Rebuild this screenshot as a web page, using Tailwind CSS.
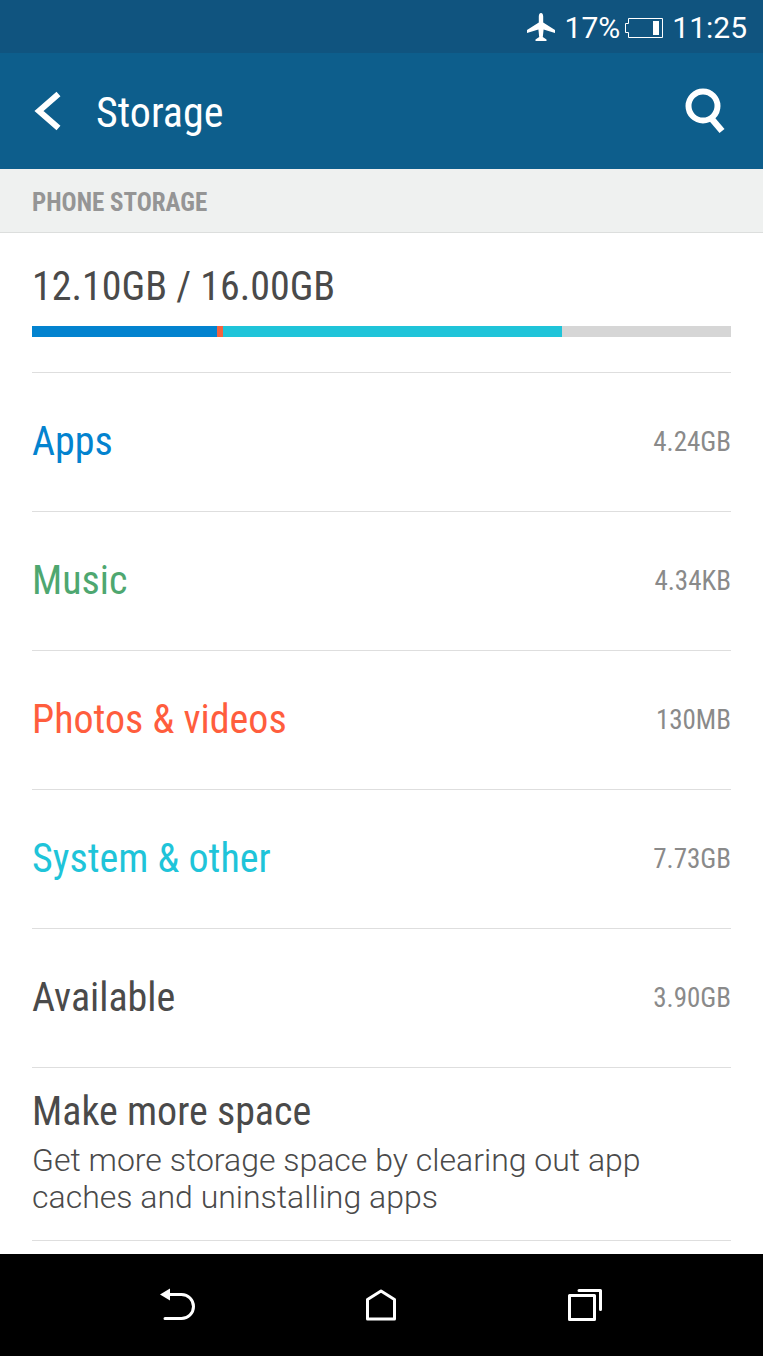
<!DOCTYPE html>
<html lang="en">

<head>
    <meta charset="UTF-8">
    <meta name="viewport" content="width=device-width, initial-scale=1">
    <title>Storage</title>
    <script src="https://cdn.jsdelivr.net/npm/@tailwindcss/browser@4"></script>
</head>

<body class="min-h-screen flex flex-col bg-white text-[#4a4a4a] font-['Roboto_Condensed','Roboto',sans-serif]">
    <!-- Status bar -->
    <div class="flex items-center justify-end gap-1 h-[53px] pt-0.5 px-4 bg-[#10547f] text-white text-[30px] leading-9 font-['Roboto',sans-serif]">
        <svg class="w-8 h-8 mr-1" viewBox="0 0 32 32" fill="currentColor" aria-hidden="true">
            <path d="M16 1c1.500 0 2.200 1.700 2.200 3.500V10.500L30 18v3L18.600 17.500l-.8 7.500 3.700 2.500V29h-11v-1.500l3.700-2.500-.8-7.500L2 21v-3l11.800-7.500V4.500C13.800 2.700 14.500 1 16 1z" />
        </svg>
        <span>17%</span>
        <svg class="w-10 h-6" viewBox="0 0 40 24" aria-hidden="true">
            <path d="M4.500 2.500h34v19h-34v-5h-3v-9h3z" fill="none" stroke="currentColor" />
            <path d="M29 5h6v14h-6z" fill="currentColor" />
        </svg>
        <span class="ml-1">11:25</span>
    </div>

    <!-- Action bar -->
    <header class="flex items-center h-[116px] px-8 bg-[#0d5e8c] text-white">
        <button type="button" aria-label="Back" class="w-16">
            <svg class="w-8 h-10" viewBox="0 0 32 40" fill="none" stroke="currentColor" stroke-width="6" aria-hidden="true">
                <path d="M26.500 3L7 20l19.500 17" />
            </svg>
        </button>
        <h1 class="flex-1 pt-1 text-[42px] leading-12">Storage</h1>
        <button type="button" aria-label="Search">
            <svg class="w-12 h-12" viewBox="0 0 48 48" fill="none" stroke="currentColor" aria-hidden="true">
                <circle cx="20" cy="19" r="14.500" stroke-width="6" />
                <path d="M28 31l11 13" stroke-width="6.500" />
            </svg>
        </button>
    </header>

    <main>
        <h2 class="h-16 px-8 pt-1 flex items-center bg-[#eff1f0] border-b border-[#dcdedd] text-[#959595] text-[25px] font-bold">PHONE STORAGE</h2>

        <section class="mx-8 pt-[30px] pb-[35px] border-b border-[#dedede]">
            <p class="text-[40px] leading-12">12.10GB / 16.00GB</p>
            <div class="flex h-[11px] mt-[15px] bg-[#d6d6d6]">
                <div class="bg-[#0383cf]" style="width: 26.500%"></div>
                <div class="bg-[#f5623f]" style="width: 0.800%"></div>
                <div class="bg-[#1fc4d9]" style="width: 48.500%"></div>
            </div>
        </section>

        <ul class="mx-8">
            <li class="border-b border-[#dedede]">
                <a href="#apps" class="flex items-center justify-between h-[138px]">
                    <span class="text-[40px] leading-12 text-[#0383cf]">Apps</span>
                    <span class="text-[27px] leading-10 text-[#8a8a8a]">4.24GB</span>
                </a>
            </li>
            <li class="border-b border-[#dedede]">
                <a href="#music" class="flex items-center justify-between h-[138px]">
                    <span class="text-[40px] leading-12 text-[#4ea770]">Music</span>
                    <span class="text-[27px] leading-10 text-[#8a8a8a]">4.34KB</span>
                </a>
            </li>
            <li class="border-b border-[#dedede]">
                <a href="#photos" class="flex items-center justify-between h-[138px]">
                    <span class="text-[40px] leading-12 text-[#ff5d3d]">Photos &amp; videos</span>
                    <span class="text-[27px] leading-10 text-[#8a8a8a]">130MB</span>
                </a>
            </li>
            <li class="border-b border-[#dedede]">
                <a href="#system" class="flex items-center justify-between h-[138px]">
                    <span class="text-[40px] leading-12 text-[#1fc4d9]">System &amp; other</span>
                    <span class="text-[27px] leading-10 text-[#8a8a8a]">7.73GB</span>
                </a>
            </li>
            <li class="border-b border-[#dedede]">
                <div class="flex items-center justify-between h-[138px]">
                    <span class="text-[40px] leading-12">Available</span>
                    <span class="text-[27px] leading-10 text-[#8a8a8a]">3.90GB</span>
                </div>
            </li>
            <li class="border-b border-[#dedede]">
                <a href="#clean" class="block pt-5 pb-6">
                    <span class="block mb-1.5 text-[40px] leading-12">Make more space</span>
                    <span class="block text-[32px] leading-[37px] font-light font-['Roboto',sans-serif]">Get more storage space by clearing out app caches and uninstalling apps</span>
                </a>
            </li>
        </ul>
    </main>

    <!-- Navigation bar -->
    <nav class="mt-auto h-[102px] px-[76px] grid grid-cols-3 items-center bg-black text-white">
        <button type="button" aria-label="Back" class="flex justify-center">
            <svg class="w-10 h-10" viewBox="0 0 40 40" fill="none" stroke="currentColor" stroke-width="3" aria-hidden="true">
                <path d="M10 9.500h13.500a12 12 0 0 1 0 24H7" stroke-linecap="round" />
                <path d="M2 9.500l10-6v12z" fill="currentColor" stroke="none" />
            </svg>
        </button>
        <button type="button" aria-label="Home" class="flex justify-center">
            <svg class="w-10 h-10" viewBox="0 0 40 40" fill="none" stroke="currentColor" stroke-width="3" stroke-linejoin="round" aria-hidden="true">
                <path d="M6.500 34V14.500L20 6l13.500 8.500V34z" />
            </svg>
        </button>
        <button type="button" aria-label="Recent apps" class="flex justify-center">
            <svg class="w-10 h-10" viewBox="0 0 40 40" fill="none" stroke="currentColor" stroke-width="3" stroke-linejoin="round" aria-hidden="true">
                <path d="M4.500 10.500h25v24h-25z" />
                <path d="M14 5.500h21.500v19" stroke-linecap="round" />
            </svg>
        </button>
    </nav>
</body>

</html>
